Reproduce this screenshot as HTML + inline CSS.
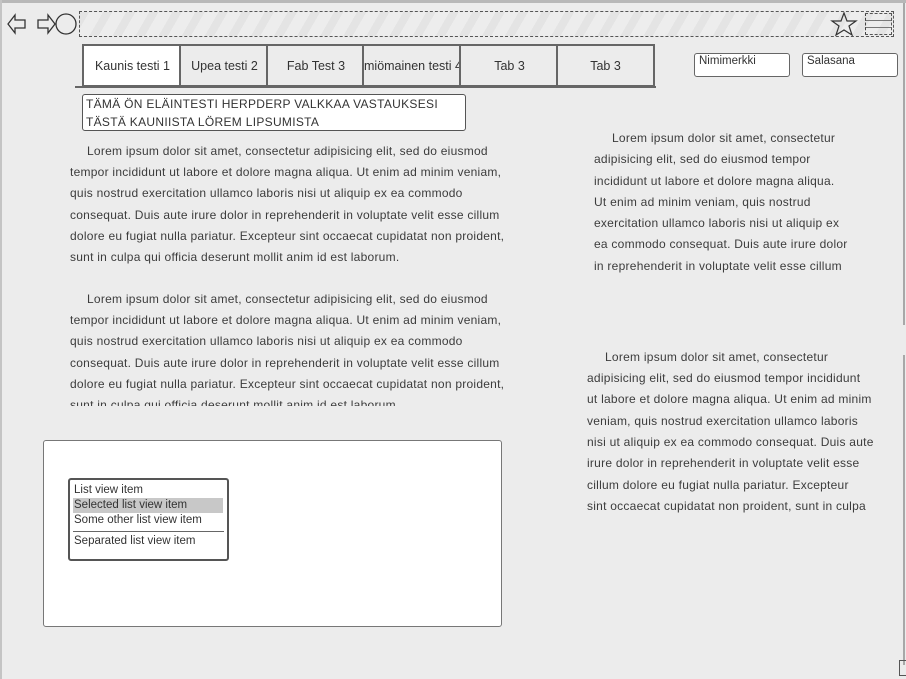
<!DOCTYPE html>
<html><head><meta charset="utf-8"><style>
html,body{margin:0;padding:0}
body{width:906px;height:679px;background:#ececec;position:relative;overflow:hidden;font-family:"Liberation Sans",sans-serif;color:#444}
.a{position:absolute}
.l{position:absolute;white-space:nowrap;font-size:12px;letter-spacing:.25px;color:#3c3c3c}
.tab{position:absolute;top:44px;height:43px;border:2px solid #666;border-right:none;box-sizing:border-box;background:#ececec;font-size:12.5px;text-align:center;line-height:40px;color:#333;overflow:hidden;white-space:nowrap}
</style></head><body>
<div class="a" style="left:0;top:0;width:906px;height:3px;background:#b8b8b8"></div>
<div class="a" style="left:0;top:0;width:2px;height:679px;background:#c4c4c4"></div>
<div class="a" style="left:903px;top:3px;width:2px;height:322px;background:#a8a8a8"></div>
<div class="a" style="left:903px;top:355px;width:2px;height:310px;background:#a8a8a8"></div>
<div class="a" style="left:899px;top:660px;width:7px;height:14px;border:1px solid #555"></div>
<svg class="a" style="left:6px;top:11px" width="72" height="26" viewBox="0 0 72 26" fill="none" stroke="#333" stroke-width="1.3">
<path d="M2 13 L9 4 V9 H19 V17 H9 V22 Z"/>
<path d="M32 9 H42 V4 L49 13 L42 22 V17 H32 Z"/>
<circle cx="60" cy="13" r="10"/>
</svg>
<div class="a" style="left:79px;top:11px;width:815px;height:26px;border:1.5px dashed #555;box-sizing:border-box;background:repeating-linear-gradient(120deg,#e4e4e4 0 8px,#ededed 8px 20px)"></div>
<svg class="a" style="left:830px;top:11px" width="28" height="26" viewBox="0 0 28 26" fill="none" stroke="#333" stroke-width="1.2"><path d="M14 2 L17 10 L26 10 L19 15 L22 24 L14 19 L6 24 L9 15 L2 10 L11 10 Z"/></svg>
<div class="a" style="left:865px;top:13px;width:27px;height:22px;border:1px dashed #555;border-left:1.5px dashed #444;box-sizing:border-box;background:repeating-linear-gradient(0deg,transparent 0 6px,#777 6px 7px)"></div>
<div class="tab" style="left:82px;width:99px;background:#fff">Kaunis testi 1</div>
<div class="tab" style="left:179px;width:89px">Upea testi 2</div>
<div class="tab" style="left:266px;width:98px">Fab Test 3</div>
<div class="tab" style="left:362px;width:99px;text-align:left">miömainen testi 4</div>
<div class="tab" style="left:459px;width:99px">Tab 3</div>
<div class="tab" style="left:556px;width:99px;border-right:2px solid #666">Tab 3</div>
<div class="a" style="left:75px;top:86px;width:581px;height:2px;background:#666"></div>
<div class="a" style="left:694px;top:53px;width:96px;height:24px;border:1px solid #666;border-radius:3px;background:#fff;box-sizing:border-box;font-size:11.5px;padding:0 0 0 4px;line-height:14px;color:#333">Nimimerkki</div>
<div class="a" style="left:802px;top:53px;width:96px;height:24px;border:1px solid #666;border-radius:3px;background:#fff;box-sizing:border-box;font-size:11.5px;padding:0 0 0 4px;line-height:14px;color:#333">Salasana</div>
<div class="a" style="left:82px;top:94px;width:384px;height:37px;border:1px solid #555;border-radius:3px;background:#fff;box-sizing:border-box;font-size:12px;line-height:18px;padding:0 0 0 3px;color:#333;letter-spacing:.3px">TÄMÄ ÖN ELÄINTESTI HERPDERP VALKKAA VASTAUKSESI<br>TÄSTÄ KAUNIISTA LÖREM LIPSUMISTA</div>
<div class="l" style="left:87px;top:144px">Lorem ipsum dolor sit amet, consectetur adipisicing elit, sed do eiusmod</div>
<div class="l" style="left:70px;top:165px">tempor incididunt ut labore et dolore magna aliqua. Ut enim ad minim veniam,</div>
<div class="l" style="left:70px;top:186px">quis nostrud exercitation ullamco laboris nisi ut aliquip ex ea commodo</div>
<div class="l" style="left:70px;top:208px">consequat. Duis aute irure dolor in reprehenderit in voluptate velit esse cillum</div>
<div class="l" style="left:70px;top:229px">dolore eu fugiat nulla pariatur. Excepteur sint occaecat cupidatat non proident,</div>
<div class="l" style="left:70px;top:250px">sunt in culpa qui officia deserunt mollit anim id est laborum.</div>
<div class="a" style="left:60px;top:290px;width:470px;height:116px;overflow:hidden">
<div class="l" style="left:27px;top:2px">Lorem ipsum dolor sit amet, consectetur adipisicing elit, sed do eiusmod</div>
<div class="l" style="left:10px;top:23px">tempor incididunt ut labore et dolore magna aliqua. Ut enim ad minim veniam,</div>
<div class="l" style="left:10px;top:44px">quis nostrud exercitation ullamco laboris nisi ut aliquip ex ea commodo</div>
<div class="l" style="left:10px;top:66px">consequat. Duis aute irure dolor in reprehenderit in voluptate velit esse cillum</div>
<div class="l" style="left:10px;top:87px">dolore eu fugiat nulla pariatur. Excepteur sint occaecat cupidatat non proident,</div>
<div class="l" style="left:10px;top:108px">sunt in culpa qui officia deserunt mollit anim id est laborum.</div>
</div>
<div class="l" style="left:612px;top:131px">Lorem ipsum dolor sit amet, consectetur</div>
<div class="l" style="left:594px;top:152px">adipisicing elit, sed do eiusmod tempor</div>
<div class="l" style="left:594px;top:174px">incididunt ut labore et dolore magna aliqua.</div>
<div class="l" style="left:594px;top:195px">Ut enim ad minim veniam, quis nostrud</div>
<div class="l" style="left:594px;top:216px">exercitation ullamco laboris nisi ut aliquip ex</div>
<div class="l" style="left:594px;top:237px">ea commodo consequat. Duis aute irure dolor</div>
<div class="l" style="left:594px;top:259px">in reprehenderit in voluptate velit esse cillum</div>
<div class="l" style="left:605px;top:350px">Lorem ipsum dolor sit amet, consectetur</div>
<div class="l" style="left:587px;top:371px">adipisicing elit, sed do eiusmod tempor incididunt</div>
<div class="l" style="left:587px;top:392px">ut labore et dolore magna aliqua. Ut enim ad minim</div>
<div class="l" style="left:587px;top:414px">veniam, quis nostrud exercitation ullamco laboris</div>
<div class="l" style="left:587px;top:435px">nisi ut aliquip ex ea commodo consequat. Duis aute</div>
<div class="l" style="left:587px;top:456px">irure dolor in reprehenderit in voluptate velit esse</div>
<div class="l" style="left:587px;top:478px">cillum dolore eu fugiat nulla pariatur. Excepteur</div>
<div class="l" style="left:587px;top:499px">sint occaecat cupidatat non proident, sunt in culpa</div>
<div class="a" style="left:43px;top:440px;width:459px;height:187px;border:1px solid #777;border-radius:3px;background:#fff;box-sizing:border-box"></div>
<div class="a" style="left:68px;top:478px;width:161px;height:83px;border:2px solid #555;border-radius:3px;background:#fff;box-sizing:border-box;font-size:11.5px;color:#333;line-height:15px">
<div style="padding-left:4px;margin-top:3px">List view item</div>
<div style="margin:0 4px 0 3px;background:#c8c8c8;padding-left:1px">Selected list view item</div>
<div style="padding-left:4px">Some other list view item</div>
<div style="margin:3px 3px 2px;height:1px;background:#666"></div>
<div style="padding-left:4px">Separated list view item</div>
</div>
</body></html>
